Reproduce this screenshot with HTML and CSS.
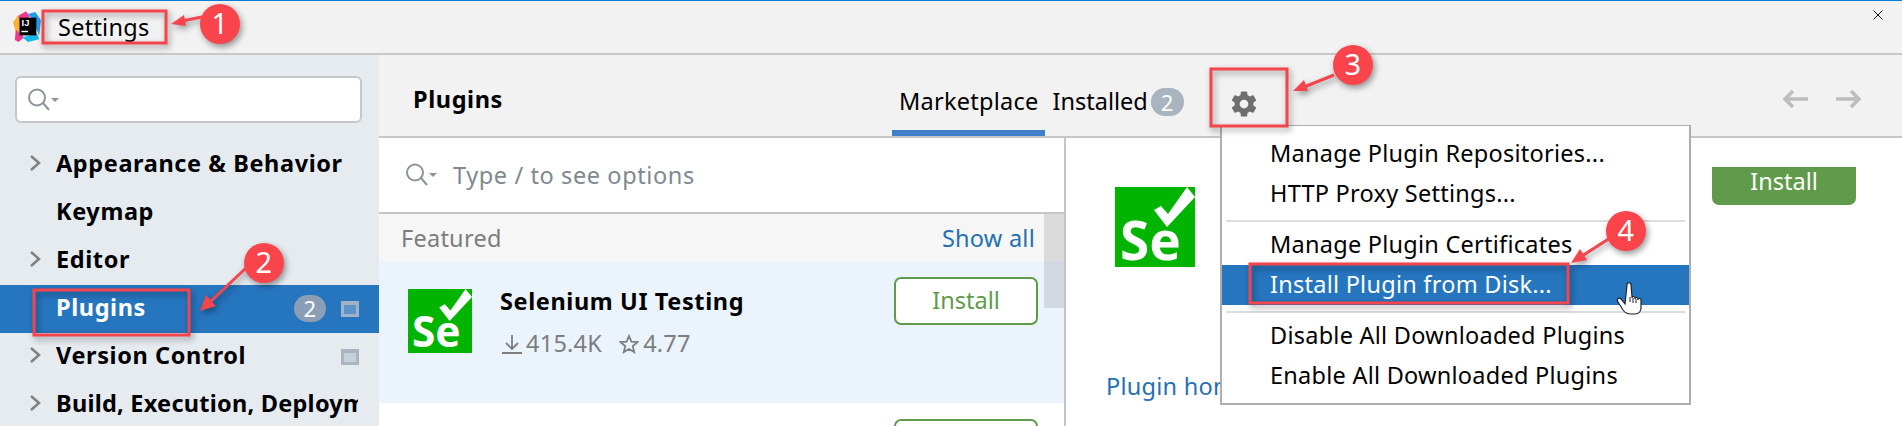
FILE: index.html
```html
<!DOCTYPE html>
<html lang="en">
<head>
  <meta charset="UTF-8">
  <title>Settings</title>
  <link rel="stylesheet" href="styles.css">
</head>
<body>
  <div class="window">
    <header class="titlebar">
      <svg class="app-logo" viewBox="0 0 30 34">
        <polygon points="4,6 14,0 18,6 8,20" fill="#f0388f"/>
        <polygon points="0,12 6,4 9,24 3,22" fill="#fbb034"/>
        <polygon points="3,20 12,28 6,33 2,31" fill="#f0388f"/>
        <polygon points="16,3 24,1 30,10 28,26 20,8" fill="#1f9de8"/>
        <polygon points="10,28 26,24 28,30 16,33" fill="#18b7ea"/>
        <rect x="7" y="7" width="18" height="19" fill="#000"/>
        <text class="app-logo-text" x="9" y="16">IJ</text>
        <rect x="9" y="21" width="7" height="1.6" fill="#fff"/>
      </svg>
      <span class="titlebar-text">Settings</span>
      <svg class="close-icon" viewBox="0 0 10 10"><path d="M.5.5l9 9M9.500.5l-9 9"/></svg>
    </header>

    <div class="content">
      <aside class="sidebar">
        <div class="side-search">
          <svg class="search-icon" viewBox="0 0 32 24"><circle cx="10" cy="9.5" r="8"/><path d="M16 15l6 7"/><path class="search-caret" d="M24 10h8l-4 4z"/></svg>
        </div>
        <ul class="tree">
          <li class="tree-row"><svg class="chevron" viewBox="0 0 12 18"><path d="M2 2l8 7-8 7"/></svg><span class="tree-label">Appearance &amp; Behavior</span></li>
          <li class="tree-row"><span class="tree-label no-arrow">Keymap</span></li>
          <li class="tree-row"><svg class="chevron" viewBox="0 0 12 18"><path d="M2 2l8 7-8 7"/></svg><span class="tree-label">Editor</span></li>
          <li class="tree-row selected">
            <span class="tree-label no-arrow">Plugins</span>
            <span class="side-badge">2</span>
            <span class="project-icon"></span>
          </li>
          <li class="tree-row"><svg class="chevron" viewBox="0 0 12 18"><path d="M2 2l8 7-8 7"/></svg><span class="tree-label">Version Control</span><span class="project-icon"></span></li>
          <li class="tree-row"><svg class="chevron" viewBox="0 0 12 18"><path d="M2 2l8 7-8 7"/></svg><span class="tree-label clipped">Build, Execution, Deployment</span></li>
        </ul>
      </aside>

      <main class="main">
        <div class="main-header">
          <h1 class="main-title">Plugins</h1>
          <div class="tabs">
            <span class="tab active">Marketplace</span>
            <span class="tab plain">Installed</span>
            <span class="tab-badge">2</span>
          </div>
          <svg class="gear" viewBox="0 0 24 24"><path d="M19.43 12.98c.04-.32.07-.64.07-.98s-.03-.66-.07-.98l2.11-1.65c.19-.15.24-.42.12-.64l-2-3.46c-.12-.22-.39-.3-.61-.22l-2.49 1c-.52-.4-1.08-.73-1.69-.98l-.38-2.65C14.46 2.18 14.25 2 14 2h-4c-.25 0-.46.18-.49.42l-.38 2.65c-.61.25-1.17.59-1.69.98l-2.49-1c-.23-.09-.49 0-.61.22l-2 3.46c-.13.22-.07.49.12.64l2.11 1.65c-.04.32-.07.65-.07.98s.03.66.07.98l-2.11 1.65c-.19.15-.24.42-.12.64l2 3.46c.12.22.39.3.61.22l2.49-1c.52.4 1.08.73 1.69.98l.38 2.65c.03.24.24.42.49.42h4c.25 0 .46-.18.49-.42l.38-2.65c.61-.25 1.17-.59 1.69-.98l2.49 1c.23.09.49 0 .61-.22l2-3.46c.12-.22.07-.49-.12-.64l-2.11-1.65zM12 15.5c-1.93 0-3.5-1.57-3.5-3.5s1.57-3.5 3.5-3.5 3.5 1.57 3.5 3.5-1.57 3.5-3.5 3.5z"/></svg>
          <div class="nav-arrows">
            <svg class="nav-arrow" viewBox="0 0 26 20"><path d="M26 10H3M11 2l-8 8 8 8"/></svg>
            <svg class="nav-arrow" viewBox="0 0 26 20"><path d="M0 10h23M15 2l8 8-8 8"/></svg>
          </div>
        </div>

        <div class="panels">
          <section class="list-panel">
            <div class="list-search">
              <svg class="search-icon" viewBox="0 0 32 24"><circle cx="10" cy="9.5" r="8"/><path d="M16 15l6 7"/><path class="search-caret" d="M24 10h8l-4 4z"/></svg>
              <span class="placeholder">Type / to see options</span>
            </div>
            <div class="list-heading">
              <span class="heading-label">Featured</span>
              <span class="show-all">Show all</span>
            </div>
            <div class="plugin-card highlighted">
              <svg class="se-logo" viewBox="0 0 80 80">
                <rect width="80" height="80" fill="#00b400"/>
                <path d="M72 0L80 10 52 40 39 23 46 19 53 27z" fill="#fff"/>
                <text class="se-logo-text" x="5" y="73">Se</text>
              </svg>
              <div class="plugin-info">
                <div class="plugin-name">Selenium UI Testing</div>
                <div class="plugin-stats">
                  <svg class="stat-icon" viewBox="0 0 20 20"><path d="M10 1v13M4 9l6 6 6-6M0 19h20"/></svg>
                  <span class="stat-value">415.4K</span>
                  <svg class="stat-icon star" viewBox="0 0 20 20"><path d="M10 2l2.4 5.6 6 .5-4.6 4 1.4 6L10 15l-5.200 3.100 1.400-6-4.600-4 6-.5z"/></svg>
                  <span class="stat-value">4.77</span>
                </div>
              </div>
              <button class="install-btn">Install</button>
            </div>
            <div class="plugin-card">
              <button class="install-btn">Install</button>
            </div>
            <div class="scroll-thumb"></div>
          </section>

          <section class="detail-panel">
            <div class="detail-top">
              <svg class="se-logo large" viewBox="0 0 80 80">
                <rect width="80" height="80" fill="#00b400"/>
                <path d="M72 0L80 10 52 40 39 23 46 19 53 27z" fill="#fff"/>
                <text class="se-logo-text" x="5" y="73">Se</text>
              </svg>
              <div class="install-filled">Install</div>
            </div>
            <a class="plugin-link">Plugin homepage</a>
          </section>
        </div>
      </main>
    </div>

    <div class="popup">
      <div class="popup-item">Manage Plugin Repositories...</div>
      <div class="popup-item">HTTP Proxy Settings...</div>
      <div class="popup-sep"></div>
      <div class="popup-item">Manage Plugin Certificates</div>
      <div class="popup-item active">Install Plugin from Disk...</div>
      <div class="popup-sep"></div>
      <div class="popup-item">Disable All Downloaded Plugins</div>
      <div class="popup-item">Enable All Downloaded Plugins</div>
    </div>

    <svg class="marks" viewBox="0 0 1902 426">
      <g class="mark-group">
        <rect class="mark-box" x="43" y="11" width="123" height="32"/>
        <rect class="mark-box" x="34" y="290" width="155" height="45"/>
        <rect class="mark-box" x="1211" y="69" width="76" height="57"/>
        <rect class="mark-box" x="1250" y="264" width="318" height="39"/>

        <path class="mark-line" d="M202 17L182 21"/>
        <polygon class="mark-head" points="171,24 184,15 186,26"/>
        <path class="mark-line" d="M246 268L210 302"/>
        <polygon class="mark-head" points="200,311 206,295 216,306"/>
        <path class="mark-line" d="M1334 75L1304 87"/>
        <polygon class="mark-head" points="1293,91 1304,80 1308,91"/>
        <path class="mark-line" d="M1610 238L1582 256"/>
        <polygon class="mark-head" points="1571,263 1580,249 1587,260"/>

        <circle class="mark-dot" cx="220" cy="24" r="20"/>
        <circle class="mark-dot" cx="264" cy="263" r="20"/>
        <circle class="mark-dot" cx="1353" cy="65" r="20"/>
        <circle class="mark-dot" cx="1626" cy="231" r="20"/>
      </g>
      <text class="mark-num" x="220" y="34">1</text>
      <text class="mark-num" x="264" y="273">2</text>
      <text class="mark-num" x="1353" y="75">3</text>
      <text class="mark-num" x="1626" y="241">4</text>
      <path class="hand" d="M1625 304l-4-5c-2-2-5 0-3 3l5 8c2 3 4 4 8 4h4c4 0 6-3 6-6v-8c0-2-3-2-3 0v-1c0-2-3-2-3 0v-1c0-2-3-2-3 0v-1l-1-12c0-3-4-3-4 0z"/>
      <path class="hand-lines" d="M1630 297v5M1633 298v5M1636 299v4"/>
    </svg>
  </div>
</body>
</html>
```

FILE: styles.css
```css
* {
  box-sizing: border-box;
}
html, body {
  margin: 0;
  height: 100%;
  overflow: hidden;
  background: #fff;
}
.window {
  position: relative;
  width: 1902px;
  height: 426px;
  overflow: hidden;
  display: flex;
  flex-direction: column;
  font-family: "Noto Sans", sans-serif;
  font-size: 23.5px;
  letter-spacing: 0.25px;
  color: #000;
}

/* title bar */
.titlebar {
  height: 55px;
  flex: none;
  display: flex;
  align-items: flex-start;
  background: #f2f2f2;
  border-top: 1px solid #0a7bd6;
  border-bottom: 2px solid #c8c8c8;
  padding: 10px 0 0 13px;
}
.app-logo {
  width: 28px;
  height: 32px;
  flex: none;
}
.app-logo-text {
  font-family: "Liberation Sans", sans-serif;
  font-size: 10px;
  font-weight: bold;
  fill: #fff;
}
.titlebar-text {
  margin: 0 0 0 17px;
  line-height: 33px;
}
.close-icon {
  width: 10px;
  height: 10px;
  margin: -1px 19px 0 auto;
}
.close-icon path {
  stroke: #111;
  stroke-width: 1;
  fill: none;
}

.content {
  flex: 1;
  display: flex;
  min-height: 0;
}

/* left tree */
.sidebar {
  width: 379px;
  flex: none;
  background: #e6ebf0;
  padding-top: 21px;
}
.side-search {
  height: 47px;
  margin: 0 17px 0 15px;
  background: #fff;
  border: 2px solid #c4c8cc;
  border-radius: 6px;
  padding: 10px 0 0 10px;
}
.search-icon {
  width: 32px;
  height: 24px;
  flex: none;
  display: block;
}
.search-icon circle,
.search-icon > path {
  fill: none;
  stroke: #8c9399;
  stroke-width: 2;
}
.search-icon .search-caret {
  fill: #8c9399;
  stroke: none;
}
.tree {
  list-style: none;
  margin: 18px 0 0;
  padding: 0;
}
.tree-row {
  height: 48px;
  display: flex;
  align-items: center;
  padding: 0 20px 4px 29px;
}
.tree-row.selected {
  background: #2675bf;
  color: #fff;
}
.chevron {
  width: 12px;
  height: 18px;
  flex: none;
  margin-right: 15px;
}
.chevron path {
  fill: none;
  stroke: #808080;
  stroke-width: 2.500;
}
.tree-label {
  font-weight: 700;
  letter-spacing: 0.6px;
  white-space: nowrap;
}
.tree-label.no-arrow {
  margin-left: 27px;
}
.tree-label.clipped {
  width: 302px;
  overflow: hidden;
  flex: none;
  letter-spacing: 0.25px;
}
.side-badge {
  width: 32px;
  height: 27px;
  margin: 3px 0 0 auto;
  border-radius: 14px;
  background: #8a9fb5;
  color: #fff;
  font-size: 22px;
  line-height: 27px;
  text-align: center;
}
.project-icon {
  width: 18px;
  height: 16px;
  margin: 3px 0 0 auto;
  flex: none;
  border: 3px solid #a9b5c0;
  border-top-width: 4px;
  background: #c6d0d9;
}
.side-badge + .project-icon {
  margin-left: 15px;
  border-color: #9fb2c8;
  background: #5d93c8;
}

/* plugin page */
.main {
  flex: 1;
  display: flex;
  flex-direction: column;
  min-width: 0;
}
.main-header {
  height: 83px;
  flex: none;
  display: flex;
  align-items: flex-start;
  background: #f2f2f2;
  border-bottom: 2px solid #c6c6c6;
  padding-left: 34px;
}
.main-title {
  width: 89px;
  flex: none;
  margin: 28px 0 0;
  font-size: 23.5px;
  font-weight: 700;
  letter-spacing: 0.6px;
  line-height: 33px;
  white-space: nowrap;
}
.tabs {
  display: flex;
  align-items: flex-start;
  margin-left: 390px;
  height: 81px;
}
.tab {
  height: 81px;
  padding: 30px 7px 0;
  line-height: 33px;
}
.tab.plain {
  letter-spacing: 0;
}
.tab.active {
  border-bottom: 6px solid #3f80c8;
}
.tab-badge {
  width: 33px;
  height: 28px;
  margin: 33px 0 0 -4px;
  border-radius: 14px;
  background: #a8b4bf;
  color: #fff;
  font-size: 22px;
  line-height: 28px;
  text-align: center;
}
.gear {
  width: 30px;
  height: 30px;
  flex: none;
  margin: 34px 0 0 45px;
  fill: #6e6e6e;
}
.nav-arrows {
  display: flex;
  gap: 28px;
  margin: 34px 40px 0 auto;
}
.nav-arrow {
  width: 26px;
  height: 20px;
}
.nav-arrow path {
  fill: none;
  stroke: #bdbdbd;
  stroke-width: 3.500;
}
.panels {
  flex: 1;
  display: flex;
  min-height: 0;
}

/* list */
.list-panel {
  position: relative;
  width: 687px;
  flex: none;
  overflow: hidden;
  border-right: 2px solid #c6c6c6;
  background: #fff;
}
.list-search {
  height: 76px;
  display: flex;
  align-items: center;
  gap: 16px;
  padding: 0 0 0 26px;
  border-bottom: 2px solid #c6c6c6;
}
.placeholder {
  color: #808890;
  letter-spacing: 0.6px;
}
.list-heading {
  height: 47px;
  display: flex;
  justify-content: space-between;
  align-items: center;
  background: #f6f6f6;
  padding: 0 29px 0 22px;
}
.heading-label {
  color: #7d7d7d;
}
.show-all {
  color: #2470b3;
}
.plugin-card {
  display: flex;
  align-items: flex-start;
  padding: 16px 26px 0 29px;
}
.plugin-card.highlighted {
  height: 142px;
  background: #ebf3fd;
}
.se-logo {
  width: 64px;
  height: 64px;
  flex: none;
  margin-top: 12px;
}
.se-logo.large {
  width: 80px;
  height: 80px;
  margin: 20px 0 0 9px;
}
.se-logo-text {
  font-family: "Noto Sans", sans-serif;
  font-size: 53px;
  font-weight: 700;
  letter-spacing: 0;
  fill: #fff;
}
.plugin-info {
  margin-left: 28px;
}
.plugin-name {
  font-weight: 700;
  letter-spacing: 0.6px;
  line-height: 33px;
  margin-top: 8px;
}
.plugin-stats {
  display: flex;
  align-items: center;
  margin-top: 10px;
  line-height: 30px;
  color: #7d7d7d;
}
.stat-icon {
  width: 20px;
  height: 20px;
  margin: 2px 4px 0 2px;
}
.stat-icon.star {
  margin-left: 17px;
}
.stat-icon path {
  fill: none;
  stroke: #7d7d7d;
  stroke-width: 1.800;
}
.install-btn {
  width: 144px;
  height: 48px;
  margin-left: auto;
  padding: 0 0 2px;
  background: #fff;
  border: 2px solid #5f9b4b;
  border-radius: 7px;
  color: #5f9b4b;
  font: inherit;
  letter-spacing: 0;
}
.scroll-thumb {
  position: absolute;
  top: 76px;
  right: 0;
  width: 20px;
  height: 94px;
  background: rgba(0, 0, 0, 0.11);
}

/* details on the right */
.detail-panel {
  flex: 1;
  background: #fff;
  padding: 29px 46px 0 40px;
}
.detail-top {
  display: flex;
  align-items: flex-start;
}
.install-filled {
  width: 144px;
  height: 38px;
  margin-left: auto;
  background: #5f9b4b;
  border-radius: 0 0 7px 7px;
  color: #fff;
  letter-spacing: 0;
  text-align: center;
  line-height: 28px;
}
.plugin-link {
  display: block;
  margin-top: 103px;
  line-height: 33px;
  color: #2470b3;
  white-space: nowrap;
}

/* gear menu */
.popup {
  position: absolute;
  left: 1220px;
  top: 125px;
  width: 471px;
  height: 280px;
  background: #fff;
  border: 2px solid #aeaeae;
  border-top-width: 1px;
  padding-top: 8px;
}
.popup-item {
  height: 40px;
  padding: 0 0 3px 48px;
  line-height: 38px;
  white-space: nowrap;
}
.popup-item.active {
  background: #2675bf;
  color: #fff;
}
.popup-sep {
  height: 2px;
  margin: 6px 4px 3px;
  background: #dcdcdc;
}

/* red annotations */
.marks {
  position: absolute;
  left: 0;
  top: 0;
  width: 1902px;
  height: 426px;
}
.mark-group {
  filter: drop-shadow(2px 3px 3px rgba(0, 0, 0, 0.4));
}
.mark-box {
  fill: none;
  stroke: #f4444c;
  stroke-width: 3;
}
.mark-line {
  fill: none;
  stroke: #f4444c;
  stroke-width: 3;
}
.mark-head {
  fill: #f4444c;
}
.mark-dot {
  fill: #f9444c;
}
.mark-num {
  font-family: "Noto Sans", sans-serif;
  font-size: 29px;
  fill: #fff;
  text-anchor: middle;
}
.hand {
  fill: #fff;
  stroke: #222;
  stroke-width: 1.200;
}
.hand-lines {
  fill: none;
  stroke: #222;
  stroke-width: 1;
}
```
